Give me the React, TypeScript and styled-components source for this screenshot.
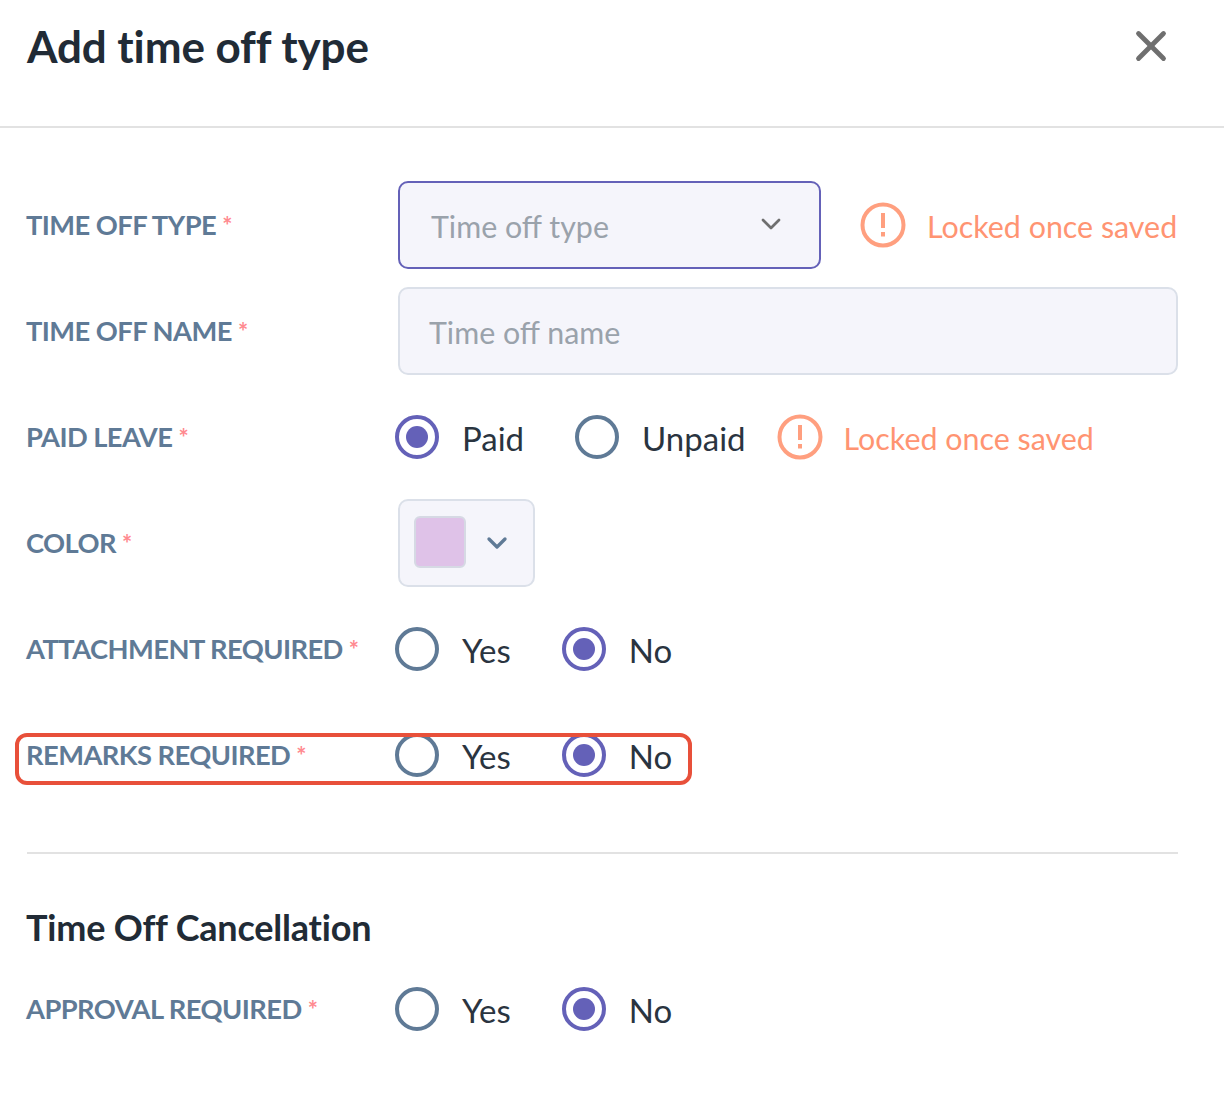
import React from "react";
import styled, { createGlobalStyle } from "styled-components";
import { X, ChevronDown } from "lucide-react";

const GlobalStyle = createGlobalStyle`
  html, body { margin: 0; padding: 0; background: #fff; }
  body { font-family: Lato, "Noto Sans", sans-serif; }
`;

const Page = styled.div`
  position: relative;
  width: 1224px;
  height: 1113px;
  overflow: hidden;
  background: #fff;
`;

const Header = styled.header`
  box-sizing: border-box;
  border-bottom: 2px solid #e2e2e2;
  height: 128px;
  padding: 0 46px 0 27px;
  display: flex;
  justify-content: space-between;
  align-items: flex-start;
`;

const Title = styled.h1`
  margin: 17px 0 0;
  font-size: 44px;
  line-height: 58px;
  font-weight: 700;
  color: #212b36;
  letter-spacing: -0.1px;
`;

const Close = styled.button`
  margin: 21px 2px 0 0;
  padding: 0;
  border: 0;
  background: none;
  color: #6f6f6f;
  display: flex;
`;

const Form = styled.div`
  padding: 53px 46px 0 27px;
`;

const Row = styled.div`
  display: flex;
  align-items: center;
  height: 88px;
  margin-bottom: 18px;
`;

const Label = styled.label`
  width: 372px;
  margin-left: -1px;
  flex: none;
  font-size: 27.3px;
  font-weight: 700;
  color: #5f7a96;
  letter-spacing: -0.55px;
  line-height: 34px;
  white-space: nowrap;
`;

const Star = styled.span`
  color: #ff8a90;
  font-size: 24px;
  font-weight: 700;
  margin-left: 6px;
  vertical-align: 0;
  line-height: 0;
`;

const Field = styled.div<{ $w: string; $focus?: boolean }>`
  width: ${(p) => p.$w};
  height: 88px;
  box-sizing: border-box;
  flex: none;
  display: flex;
  align-items: center;
  justify-content: space-between;
  background: #f5f5fb;
  border: 2px solid ${(p) => (p.$focus ? "#6461b8" : "#dbe0e9")};
  border-radius: 10px;
`;

const Placeholder = styled.span<{ $x: number }>`
  padding-left: ${(p) => p.$x}px;
  margin-top: 2px;
  font-size: 30.4px;
  color: #9aa2ab;
`;

const Chevron = styled.span<{ $c: string; $mr: number; $mt: number }>`
  color: ${(p) => p.$c};
  margin-right: ${(p) => p.$mr}px;
  margin-top: ${(p) => p.$mt}px;
  display: flex;
`;

const Locked = styled.div<{ $ml: number }>`
  margin-left: ${(p) => p.$ml}px;
  display: flex;
  align-items: center;
  gap: 21px;
  font-size: 30.4px;
  color: #ff9472;
  white-space: nowrap;
`;

const LockedText = styled.span`
  margin-top: 2px;
`;

const RadioGroup = styled.div`
  margin-left: -3px;
  display: flex;
  align-items: center;
`;

const Option = styled.div<{ $gap: number }>`
  display: flex;
  align-items: center;
  margin-right: ${(p) => p.$gap}px;
  font-size: 33px;
  color: #2a3440;
`;

const OptionText = styled.span`
  margin-top: 2px;
`;

const Circle = styled.span<{ $on?: boolean }>`
  width: 44px;
  height: 44px;
  box-sizing: border-box;
  border-radius: 50%;
  border: 4px solid ${(p) => (p.$on ? "#6461b8" : "#5f7a96")};
  margin-right: 23px;
  display: flex;
  align-items: center;
  justify-content: center;
  &::after {
    content: "";
    display: ${(p) => (p.$on ? "block" : "none")};
    width: 22px;
    height: 22px;
    border-radius: 50%;
    background: #6461b8;
  }
`;

const Swatch = styled.span`
  width: 52px;
  height: 52px;
  box-sizing: border-box;
  margin: -2px 0 0 14px;
  border: 2px solid #d6d9e4;
  border-radius: 6px;
  background: #dfc2e8;
`;

const Divider = styled.hr`
  margin: 53px 0 0;
  border: 0;
  border-top: 2px solid #e2e2e2;
`;

const SectionTitle = styled.h2`
  margin: 49px 0 14px -1px;
  font-size: 36px;
  line-height: 48px;
  font-weight: 700;
  color: #212b36;
  letter-spacing: -0.2px;
`;

const Highlight = styled.div`
  position: absolute;
  left: 15px;
  top: 733px;
  width: 677px;
  height: 52px;
  box-sizing: border-box;
  border: 4px solid #e8503a;
  border-radius: 12px;
  pointer-events: none;
`;

const WarningIcon = () => (
  <svg width="46" height="46" viewBox="0 0 46 46" fill="none">
    <circle cx="23" cy="23" r="20.5" stroke="#ff9f7f" strokeWidth="4" />
    <rect x="21" y="11" width="4" height="15" fill="#ff9f7f" />
    <rect x="21" y="30" width="4" height="4.5" fill="#ff9f7f" />
  </svg>
);

const Req = ({ children }: { children: React.ReactNode }) => (
  <Label>
    {children}
    <Star>*</Star>
  </Label>
);

const YesNo = () => (
  <RadioGroup>
    <Option $gap={51}>
      <Circle />
      <OptionText>Yes</OptionText>
    </Option>
    <Option $gap={0}>
      <Circle $on />
      <OptionText>No</OptionText>
    </Option>
  </RadioGroup>
);

export default function App() {
  return (
    <Page>
      <GlobalStyle />
      <Header>
        <Title>Add time off type</Title>
        <Close>
          <X size={50} strokeWidth={2.3} />
        </Close>
      </Header>
      <Form>
        <Row>
          <Req>TIME OFF TYPE</Req>
          <Field $w="423px" $focus>
            <Placeholder $x={31}>Time off type</Placeholder>
            <Chevron $c="#6f6f6f" $mr={32} $mt={-3}>
              <ChevronDown size={32} strokeWidth={2} />
            </Chevron>
          </Field>
          <Locked $ml={39}>
            <WarningIcon />
            <LockedText>Locked once saved</LockedText>
          </Locked>
        </Row>
        <Row>
          <Req>TIME OFF NAME</Req>
          <Field $w="780px">
            <Placeholder $x={29}>Time off name</Placeholder>
          </Field>
        </Row>
        <Row>
          <Req>PAID LEAVE</Req>
          <RadioGroup>
            <Option $gap={51}>
              <Circle $on />
              <OptionText>Paid</OptionText>
            </Option>
            <Option $gap={0}>
              <Circle />
              <OptionText>Unpaid</OptionText>
            </Option>
          </RadioGroup>
          <Locked $ml={31}>
            <WarningIcon />
            <LockedText>Locked once saved</LockedText>
          </Locked>
        </Row>
        <Row>
          <Req>COLOR</Req>
          <Field $w="137px">
            <Swatch />
            <Chevron $c="#5f7a96" $mr={20} $mt={-1}>
              <ChevronDown size={32} strokeWidth={2.5} />
            </Chevron>
          </Field>
        </Row>
        <Row>
          <Req>ATTACHMENT REQUIRED</Req>
          <YesNo />
        </Row>
        <Row>
          <Req>REMARKS REQUIRED</Req>
          <YesNo />
        </Row>
        <Divider />
        <SectionTitle>Time Off Cancellation</SectionTitle>
        <Row>
          <Req>APPROVAL REQUIRED</Req>
          <YesNo />
        </Row>
      </Form>
      <Highlight />
    </Page>
  );
}
